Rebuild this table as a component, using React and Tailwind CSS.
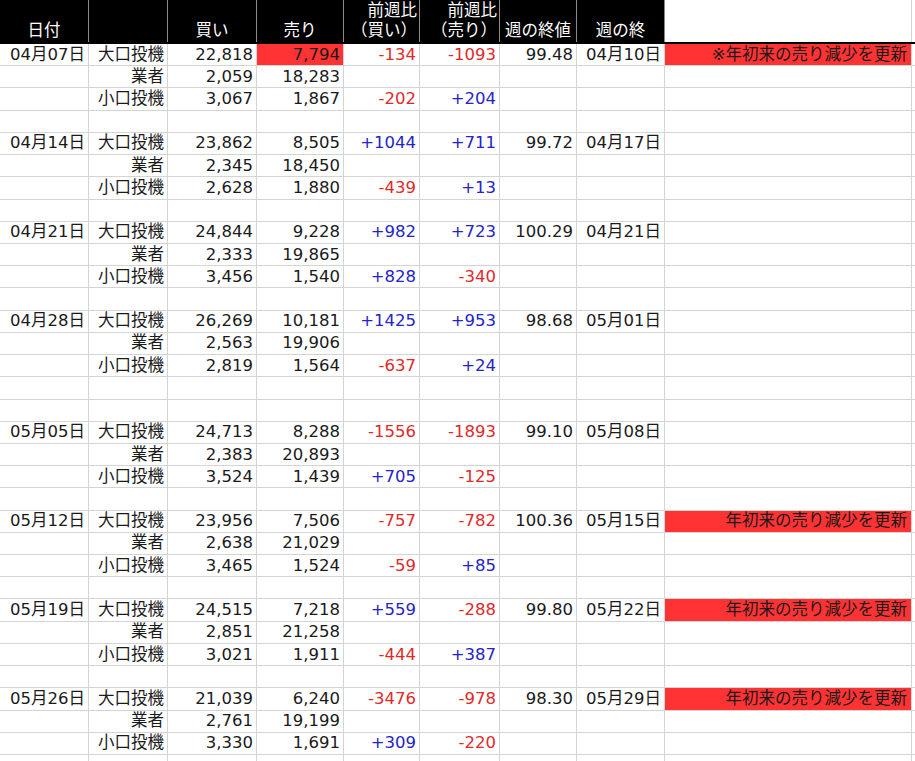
import React from "react";

// column widths include the right grid line
const W = ["w-[89px]", "w-[79px]", "w-[89px]", "w-[87px]", "w-[76px]", "w-[80px]", "w-[77px]", "w-[88px]", "w-[247px]"];

const NOTE = "年初来の売り減少を更新";

const weeks = [
  { date: "04月07日", rows: [["22,818", "7,794", "-134", "-1093"], ["2,059", "18,283"], ["3,067", "1,867", "-202", "+204"]], close: "99.48", end: "04月10日", note: "※" + NOTE, hot: true, gap: 1 },
  { date: "04月14日", rows: [["23,862", "8,505", "+1044", "+711"], ["2,345", "18,450"], ["2,628", "1,880", "-439", "+13"]], close: "99.72", end: "04月17日", gap: 1 },
  { date: "04月21日", rows: [["24,844", "9,228", "+982", "+723"], ["2,333", "19,865"], ["3,456", "1,540", "+828", "-340"]], close: "100.29", end: "04月21日", gap: 1 },
  { date: "04月28日", rows: [["26,269", "10,181", "+1425", "+953"], ["2,563", "19,906"], ["2,819", "1,564", "-637", "+24"]], close: "98.68", end: "05月01日", gap: 2 },
  { date: "05月05日", rows: [["24,713", "8,288", "-1556", "-1893"], ["2,383", "20,893"], ["3,524", "1,439", "+705", "-125"]], close: "99.10", end: "05月08日", gap: 1 },
  { date: "05月12日", rows: [["23,956", "7,506", "-757", "-782"], ["2,638", "21,029"], ["3,465", "1,524", "-59", "+85"]], close: "100.36", end: "05月15日", note: NOTE, gap: 1 },
  { date: "05月19日", rows: [["24,515", "7,218", "+559", "-288"], ["2,851", "21,258"], ["3,021", "1,911", "-444", "+387"]], close: "99.80", end: "05月22日", note: NOTE, gap: 1 },
  { date: "05月26日", rows: [["21,039", "6,240", "-3476", "-978"], ["2,761", "19,199"], ["3,330", "1,691", "+309", "-220"]], close: "98.30", end: "05月29日", note: NOTE, gap: 1 },
];

const WHO = ["大口投機", "業者", "小口投機"];

function tone(v) {
  if (!v) return "";
  return v.startsWith("-") ? "text-[#e02a2a]" : "text-[#2424c8]";
}

function Cell({ i, children, className = "" }) {
  return (
    <div className={`${W[i]} shrink-0 h-full border-r border-[#d4d4d4] flex items-center justify-end pr-[3px] whitespace-nowrap ${className}`}>
      {children}
    </div>
  );
}

function Row({ cells = [], fills = {} }) {
  return (
    <div className="flex h-[22.22px] border-b border-[#d4d4d4]">
      {W.map((_, i) => (
        <Cell key={i} i={i} className={fills[i] || ""}>
          {cells[i]}
        </Cell>
      ))}
      <div className="flex-1" />
    </div>
  );
}

function Head() {
  const cols = [
    { t: ["日付"] },
    { t: [""] },
    { t: ["買い"] },
    { t: ["売り"] },
    { t: ["前週比", "（買い）"], right: true },
    { t: ["前週比", "（売り）"], right: true },
    { t: ["週の終値"] },
    { t: ["週の終"] },
  ];
  return (
    <div>
      <div className="flex h-[42px]">
        {cols.map((col, i) => (
          <div
            key={i}
            className={`${W[i]} shrink-0 h-full bg-black border-r border-[#8a8a8a] text-white flex flex-col justify-end pb-[1px] leading-[20px] ${col.right ? "items-end pr-[2px]" : "items-center"}`}
          >
            {col.t.map((s, k) => (
              <span key={k}>{s}</span>
            ))}
          </div>
        ))}
        <div className={`${W[8]} shrink-0 h-full border-r border-[#d4d4d4]`} />
        <div className="flex-1" />
      </div>
      <div className="h-[2px] bg-black" />
    </div>
  );
}

export default function App() {
  const lines = [];
  weeks.forEach((w, wi) => {
    w.rows.forEach((r, ri) => {
      const cells = [ri === 0 ? w.date : "", WHO[ri], r[0], r[1], r[2], r[3], ri === 0 ? w.close : "", ri === 0 ? w.end : "", ri === 0 ? w.note : ""];
      const fills = { 4: tone(r[2]), 5: tone(r[3]) };
      if (ri === 0 && w.hot) fills[3] = "bg-[#ff3333]";
      if (ri === 0 && w.note) fills[8] = "bg-[#ff3333] pr-[4px]";
      lines.push(<Row key={`${wi}-${ri}`} cells={cells} fills={fills} />);
    });
    for (let g = 0; g < w.gap; g++) lines.push(<Row key={`${wi}-g${g}`} />);
  });

  return (
    <div className="w-[915px] h-[761px] overflow-hidden bg-white text-[#1a1a1a] text-[16.5px] leading-[20px] font-['DejaVu_Sans','Noto_Sans_CJK_JP',sans-serif]">
      <Head />
      {lines}
    </div>
  );
}
